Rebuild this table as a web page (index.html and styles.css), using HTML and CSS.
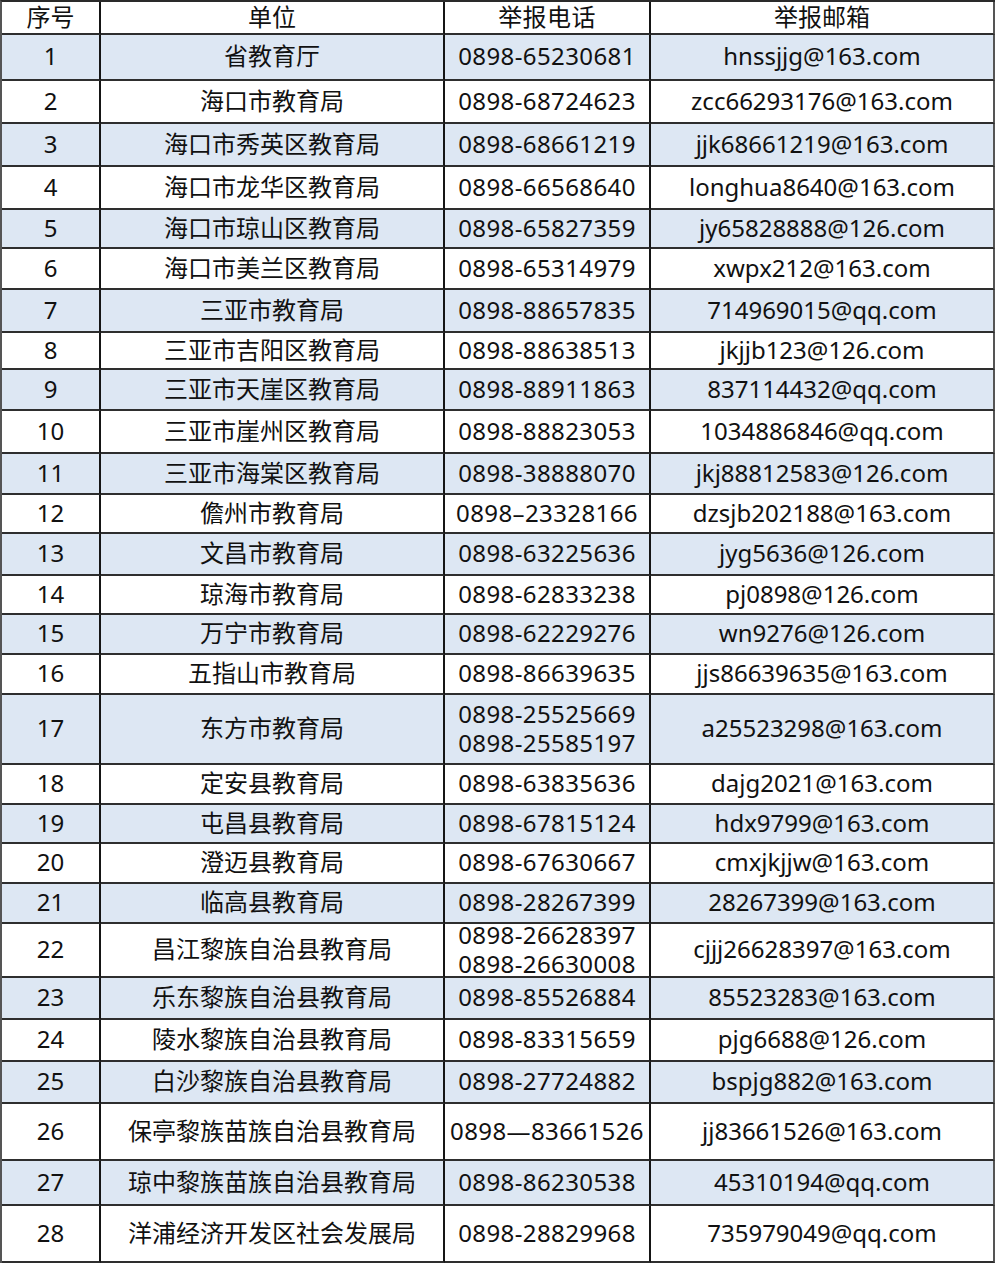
FILE: index.html
```html
<!DOCTYPE html>
<html lang="zh-CN">
<head>
<meta charset="utf-8">
<title>举报电话及邮箱</title>
<link rel="stylesheet" href="styles.css">
</head>
<body>
<div class="sheet">
  <div class="row head"><div>序号</div><div>单位</div><div>举报电话</div><div>举报邮箱</div></div>
  <div class="row shade"><div>1</div><div>省教育厅</div><div>0898-65230681</div><div>hnssjjg@163.com</div></div>
  <div class="row"><div>2</div><div>海口市教育局</div><div>0898-68724623</div><div>zcc66293176@163.com</div></div>
  <div class="row shade"><div>3</div><div>海口市秀英区教育局</div><div>0898-68661219</div><div>jjk68661219@163.com</div></div>
  <div class="row"><div>4</div><div>海口市龙华区教育局</div><div>0898-66568640</div><div>longhua8640@163.com</div></div>
  <div class="row shade"><div>5</div><div>海口市琼山区教育局</div><div>0898-65827359</div><div>jy65828888@126.com</div></div>
  <div class="row"><div>6</div><div>海口市美兰区教育局</div><div>0898-65314979</div><div>xwpx212@163.com</div></div>
  <div class="row shade"><div>7</div><div>三亚市教育局</div><div>0898-88657835</div><div>714969015@qq.com</div></div>
  <div class="row"><div>8</div><div>三亚市吉阳区教育局</div><div>0898-88638513</div><div>jkjjb123@126.com</div></div>
  <div class="row shade"><div>9</div><div>三亚市天崖区教育局</div><div>0898-88911863</div><div>837114432@qq.com</div></div>
  <div class="row"><div>10</div><div>三亚市崖州区教育局</div><div>0898-88823053</div><div>1034886846@qq.com</div></div>
  <div class="row shade"><div>11</div><div>三亚市海棠区教育局</div><div>0898-38888070</div><div>jkj88812583@126.com</div></div>
  <div class="row"><div>12</div><div>儋州市教育局</div><div>0898–23328166</div><div>dzsjb202188@163.com</div></div>
  <div class="row shade"><div>13</div><div>文昌市教育局</div><div>0898-63225636</div><div>jyg5636@126.com</div></div>
  <div class="row"><div>14</div><div>琼海市教育局</div><div>0898-62833238</div><div>pj0898@126.com</div></div>
  <div class="row shade"><div>15</div><div>万宁市教育局</div><div>0898-62229276</div><div>wn9276@126.com</div></div>
  <div class="row"><div>16</div><div>五指山市教育局</div><div>0898-86639635</div><div>jjs86639635@163.com</div></div>
  <div class="row shade"><div>17</div><div>东方市教育局</div><div><span>0898-25525669</span><span>0898-25585197</span></div><div>a25523298@163.com</div></div>
  <div class="row"><div>18</div><div>定安县教育局</div><div>0898-63835636</div><div>dajg2021@163.com</div></div>
  <div class="row shade"><div>19</div><div>屯昌县教育局</div><div>0898-67815124</div><div>hdx9799@163.com</div></div>
  <div class="row"><div>20</div><div>澄迈县教育局</div><div>0898-67630667</div><div>cmxjkjjw@163.com</div></div>
  <div class="row shade"><div>21</div><div>临高县教育局</div><div>0898-28267399</div><div>28267399@163.com</div></div>
  <div class="row"><div>22</div><div>昌江黎族自治县教育局</div><div><span>0898-26628397</span><span>0898-26630008</span></div><div>cjjj26628397@163.com</div></div>
  <div class="row shade"><div>23</div><div>乐东黎族自治县教育局</div><div>0898-85526884</div><div>85523283@163.com</div></div>
  <div class="row"><div>24</div><div>陵水黎族自治县教育局</div><div>0898-83315659</div><div>pjg6688@126.com</div></div>
  <div class="row shade"><div>25</div><div>白沙黎族自治县教育局</div><div>0898-27724882</div><div>bspjg882@163.com</div></div>
  <div class="row"><div>26</div><div>保亭黎族苗族自治县教育局</div><div>0898—83661526</div><div>jj83661526@163.com</div></div>
  <div class="row shade"><div>27</div><div>琼中黎族苗族自治县教育局</div><div>0898-86230538</div><div>45310194@qq.com</div></div>
  <div class="row"><div>28</div><div>洋浦经济开发区社会发展局</div><div>0898-28829968</div><div>735979049@qq.com</div></div>
</div>
</body>
</html>
```

FILE: styles.css
```css
html, body {
  margin: 0;
  padding: 0;
  background: #ffffff;
}

body {
  font-family: "Noto Sans", "Noto Sans CJK SC", sans-serif;
  font-size: 24px;
  color: #111111;
}

.sheet {
  display: grid;
  width: 993px;
  grid-template-columns: 99px 344px 206px 344px;
  grid-template-rows:
    33px 46px 43px 43px 43px 39px 41px 43px 37px 41px
    43px 41px 39px 42px 39px 40px 40px 70px 40px 39px
    40px 40px 54px 42px 42px 42px 57px 45px 57px;
  border-top: 2px solid #2a2a2a;
  border-left: 2px solid #555555;
}

.row {
  display: contents;
}

.row > div {
  box-sizing: border-box;
  display: flex;
  flex-direction: column;
  align-items: center;
  justify-content: center;
  overflow: hidden;
  padding-bottom: 3px;
  line-height: 29px;
  white-space: nowrap;
  border-right: 2px solid #151515;
  border-bottom: 2px solid #2e2e2e;
  background: #ffffff;
}

.row > div:nth-child(3) {
  letter-spacing: 0.4px;
}

.row > div:last-child {
  border-right-color: #555555;
}

.row.shade > div {
  background: #dde7f3;
}

.head > div {
  padding-bottom: 2px;
  line-height: 26px;
  overflow: visible;
}
```
